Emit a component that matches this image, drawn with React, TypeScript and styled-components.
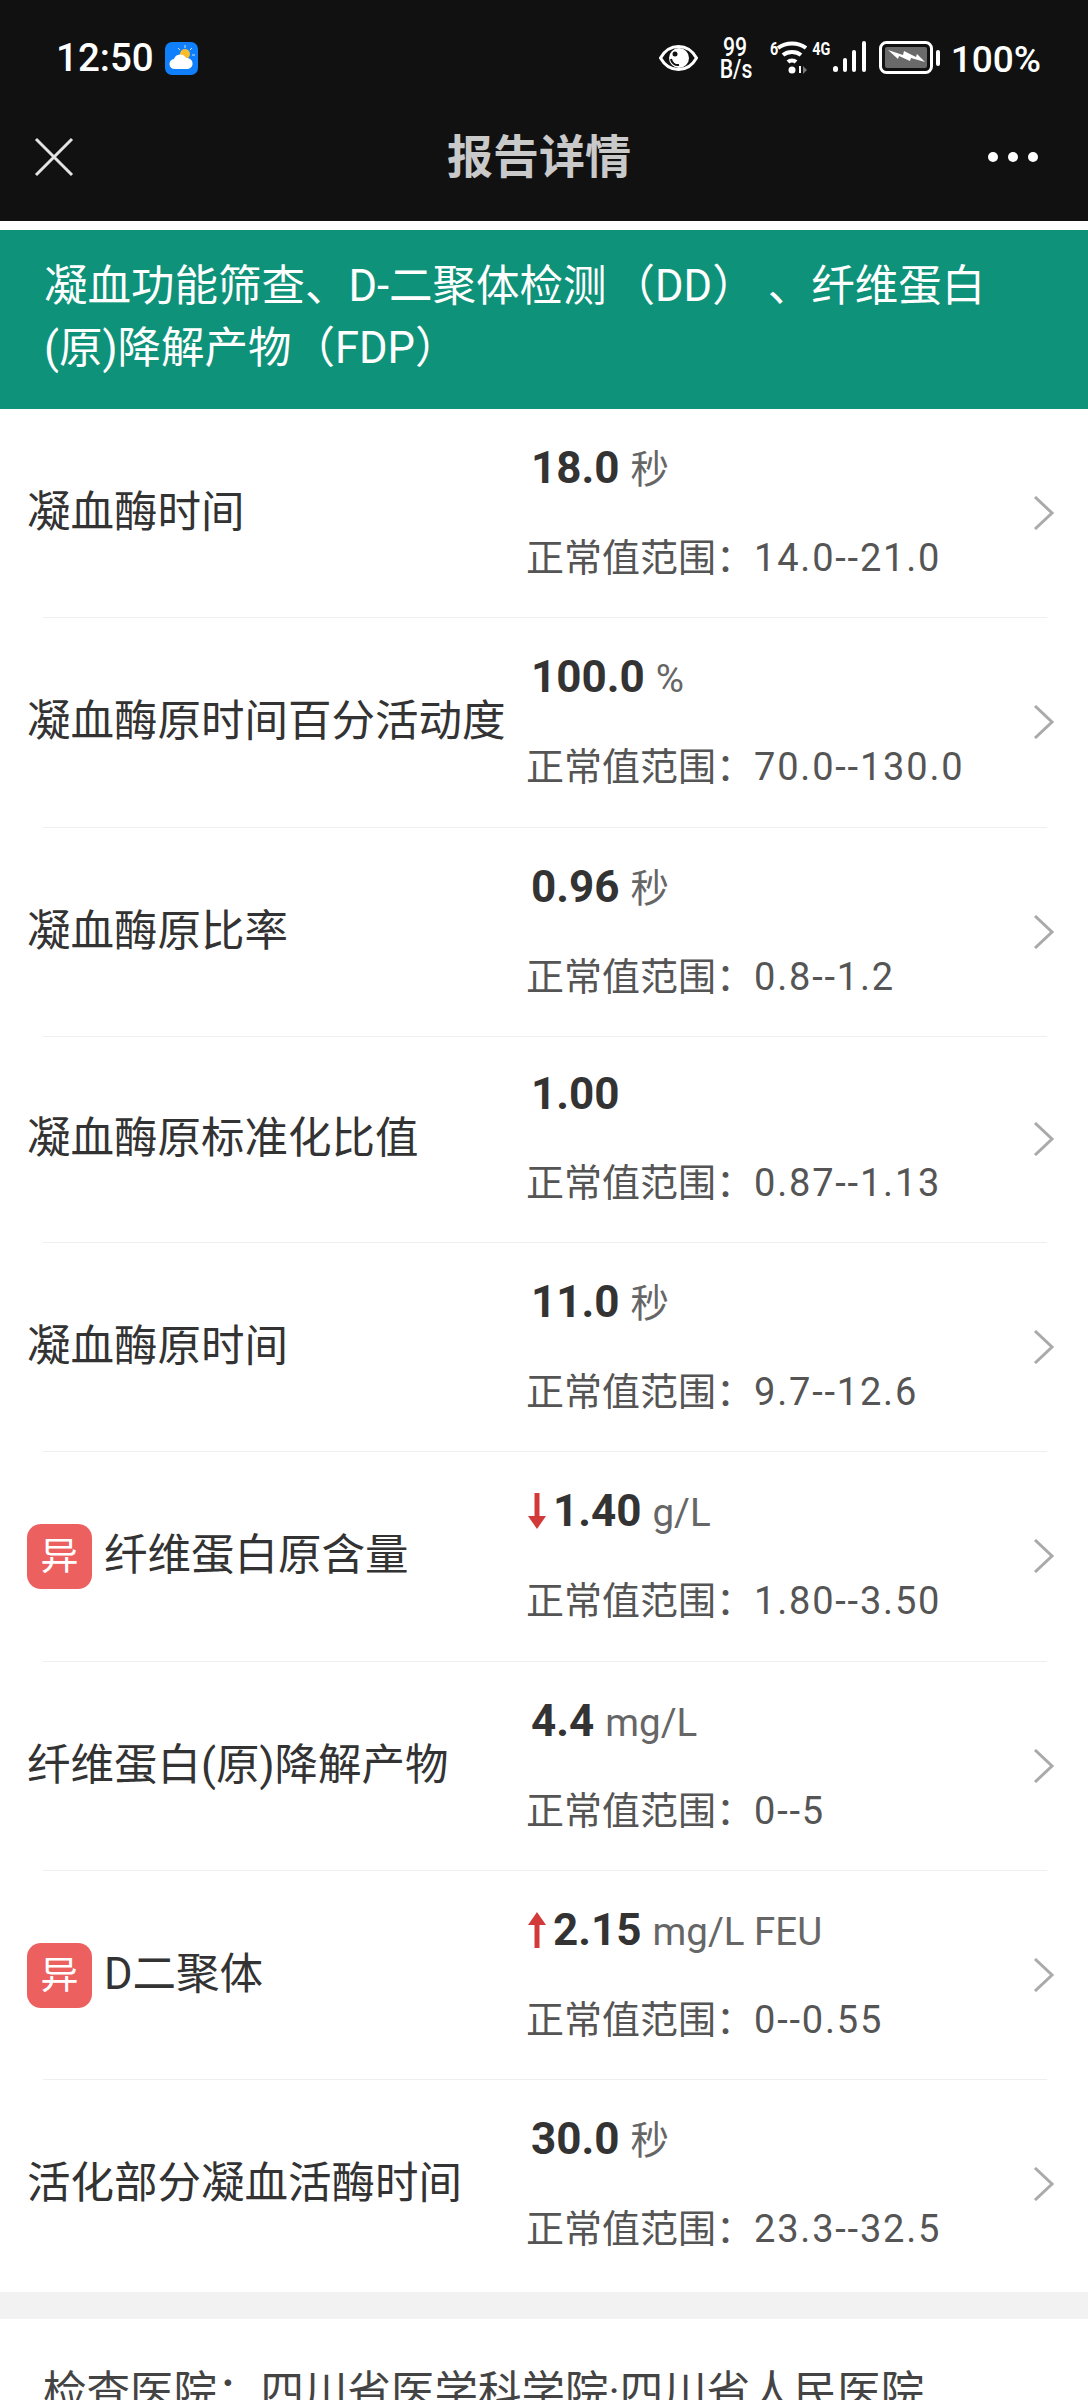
import styled, { createGlobalStyle } from 'styled-components';

const GlobalStyle = createGlobalStyle`
  html, body {
    margin: 0;
    padding: 0;
    background: #fff;
  }
  body {
    font-family: Roboto, "Noto Sans CJK SC", sans-serif;
    text-spacing-trim: space-all;
  }
  #root {
    height: 2400px;
    overflow: hidden;
  }
`;

const Header = styled.header`
  background: #111112;
  height: 221px;
  display: flex;
  flex-direction: column;
`;

const StatusBar = styled.div`
  height: 116px;
  padding: 0 47px 0 56px;
  display: flex;
  align-items: flex-start;
  justify-content: space-between;
  color: #fff;
`;

const StatusLeft = styled.div`
  display: flex;
  align-items: center;
  gap: 11px;
  padding-top: 41px;
`;

const Clock = styled.span`
  font-size: 38.5px;
  font-weight: 500;
  line-height: 34px;
`;

const StatusRight = styled.div`
  display: flex;
  align-items: flex-start;
  padding-top: 37px;
`;

const Speed = styled.div`
  width: 36px;
  margin: 0 16px 0 19px;
  font-size: 25px;
  line-height: 22px;
  text-align: center;
  font-weight: 500;
  transform: scaleX(0.85);
`;

const Tiny = styled.span<{ $gap: number }>`
  font-size: 18px;
  font-weight: 700;
  line-height: 18px;
  margin: 3px 0 0 ${({ $gap }) => $gap}px;
  transform: scaleX(0.8);
`;

const Percent = styled.span`
  font-size: 37px;
  font-weight: 500;
  line-height: 40px;
  margin: 3px 0 0 11px;
`;

const NavBar = styled.nav`
  height: 105px;
  padding: 0 50px 24px 34px;
  box-sizing: border-box;
  display: flex;
  align-items: center;
  justify-content: space-between;
`;

const NavTitle = styled.h1`
  margin: 0 0 0 16px;
  font-size: 46px;
  line-height: 60px;
  font-weight: 700;
  color: #c9c9c9;
`;

const TitleBand = styled.div`
  margin-top: 9px;
  background: #0e9279;
  padding: 26px 70px 29px 44px;
  color: #fff;
  font-size: 43.5px;
  line-height: 62px;
`;

const TitleAbbr = styled.span`
  padding: 0 12px 0 5px;
`;

const List = styled.ul`
  margin: 0;
  padding: 0 0 2px;
  list-style: none;
`;

const Row = styled.li`
  position: relative;
  display: flex;
  align-items: center;
  padding: 14px 33px 15.3px 27px;

  &::after {
    content: '';
    position: absolute;
    left: 43px;
    right: 41px;
    bottom: 0;
    height: 1px;
    background: #efefef;
  }

  &:last-child::after {
    display: none;
  }
`;

const Label = styled.div`
  width: 500px;
  display: flex;
  align-items: center;
  gap: 12px;
  font-size: 43.5px;
  line-height: 62px;
  color: #333;
`;

const Badge = styled.span`
  width: 65px;
  height: 65px;
  border-radius: 14px;
  background: #ec6060;
  color: #fff;
  font-size: 38px;
  line-height: 65px;
  text-align: center;
`;

const Values = styled.div`
  flex: 1;
`;

const Reading = styled.div<{ $flagged: boolean; $bare: boolean }>`
  display: flex;
  align-items: baseline;
  height: ${({ $bare }) => ($bare ? 87 : 90)}px;
  padding-left: ${({ $flagged }) => ($flagged ? 0 : 4)}px;
  line-height: ${({ $bare }) => ($bare ? 87 : 90)}px;
`;

const Amount = styled.strong`
  font-size: 44px;
  font-weight: 700;
  color: #333;
  margin-right: 11px;
`;

const Unit = styled.span`
  font-size: 38.5px;
  color: #666;
`;

const Range = styled.div`
  font-size: 38px;
  line-height: 90px;
  color: #555;
  margin-left: -1px;
`;

const RangeValue = styled.span`
  letter-spacing: 1.8px;
`;

const ArrowIcon = styled.svg`
  align-self: center;
  margin-right: 6px;
`;

const Chevron = styled.svg`
  width: 22px;
  height: 34px;
  flex-shrink: 0;
`;

const Gap = styled.div`
  height: 27px;
  background: #f2f2f2;
`;

const Details = styled.div`
  padding: 43px 43px 0;
  font-size: 43.5px;
  line-height: 62px;
  color: #444;
`;

type Item = {
  name: string;
  value: string;
  unit?: string;
  range: string;
  flag?: 'up' | 'down';
};

const items: Item[] = [
  { name: '凝血酶时间', value: '18.0', unit: '秒', range: '14.0--21.0' },
  { name: '凝血酶原时间百分活动度', value: '100.0', unit: '%', range: '70.0--130.0' },
  { name: '凝血酶原比率', value: '0.96', unit: '秒', range: '0.8--1.2' },
  { name: '凝血酶原标准化比值', value: '1.00', range: '0.87--1.13' },
  { name: '凝血酶原时间', value: '11.0', unit: '秒', range: '9.7--12.6' },
  { name: '纤维蛋白原含量', value: '1.40', unit: 'g/L', range: '1.80--3.50', flag: 'down' },
  { name: '纤维蛋白(原)降解产物', value: '4.4', unit: 'mg/L', range: '0--5' },
  { name: 'D二聚体', value: '2.15', unit: 'mg/L FEU', range: '0--0.55', flag: 'up' },
  { name: '活化部分凝血活酶时间', value: '30.0', unit: '秒', range: '23.3--32.5' },
];

const Arrow = ({ up }: { up: boolean }) => (
  <ArrowIcon width="20" height="36" viewBox="0 0 20 36">
    <g fill="#d23a3a" transform={up ? undefined : 'rotate(180 10 18)'}>
      <rect x="7.500" y="10" width="5" height="26" />
      <path d="M10 0 L19 13 L1 13 Z" />
    </g>
  </ArrowIcon>
);

export default function App() {
  return (
    <>
      <GlobalStyle />
      <Header>
        <StatusBar>
          <StatusLeft>
            <Clock>12:50</Clock>
            <svg width="33" height="33" viewBox="0 0 33 33">
              <rect width="33" height="33" rx="7" fill="#0f7ffb" />
              <circle cx="20" cy="12" r="5" fill="#f7bd2c" />
              <path d="M20 3v3M27 6l-2 2M30 13h-3M13 6l2 2" stroke="#cfe4ff" strokeWidth="1" />
              <path d="M10 27a5 5 0 0 1-1-10 6.500 6.500 0 0 1 12-1 5.500 5.500 0 0 1 2 11z" fill="#fff" />
            </svg>
          </StatusLeft>
          <StatusRight>
            <svg width="39" height="28" viewBox="0 0 39 28" style={{ marginTop: 7 }}>
              <path d="M1.500 14C6 6 12 2.500 19.500 2.500S33 6 37.500 14C33 22 27 25.500 19.500 25.500S6 22 1.500 14Z" fill="none" stroke="#fff" strokeWidth="3" />
              <circle cx="20" cy="14" r="10" fill="#fff" />
              <path d="M12 15a7 7 0 0 0 8 6" fill="none" stroke="#111" strokeWidth="2" />
              <circle cx="16" cy="10" r="2.500" fill="#111" />
            </svg>
            <Speed>
              99
              <br />
              B/s
            </Speed>
            <Tiny $gap={0}>6</Tiny>
            <svg width="30" height="34" viewBox="0 0 30 34" style={{ marginTop: 3, marginLeft: -2 }}>
              <g fill="none" stroke="#fff" strokeWidth="4">
                <path d="M1 8c8-6 20-6 28 0" />
                <path d="M6 15c5-4 13-4 18 0" />
                <path d="M11 22c2-2 6-2 8 0" />
              </g>
              <circle cx="15" cy="30" r="3.500" fill="#fff" />
              <path d="M23 26v7" stroke="#fff" strokeWidth="2" />
              <path d="M26 26l4 4-4 4z" fill="#777" />
            </svg>
            <Tiny $gap={3}>4G</Tiny>
            <svg width="34" height="32" viewBox="0 0 34 32" style={{ marginTop: 4 }}>
              <g fill="#fff">
                <rect x="0" y="25" width="5" height="6" rx="2.500" />
                <rect x="10" y="17" width="4" height="14" rx="2" />
                <rect x="19" y="9" width="4" height="22" rx="2" />
                <rect x="29" y="0" width="4" height="31" rx="2" />
              </g>
            </svg>
            <svg width="61" height="33" viewBox="0 0 61 33" style={{ marginTop: 4, marginLeft: 12 }}>
              <rect x="1.500" y="1.500" width="51" height="30" rx="6" fill="none" stroke="#fff" strokeWidth="3" />
              <rect x="6" y="6" width="42" height="21" rx="2" fill="#6a6a6a" />
              <path d="M9 9l15 5 1-4 12 6 1-3 8 8-14-4-1 3-11-5-1 3z" fill="#fff" />
              <rect x="57" y="9" width="4" height="16" rx="2" fill="#fff" />
            </svg>
            <Percent>100%</Percent>
          </StatusRight>
        </StatusBar>
        <NavBar>
          <svg width="40" height="40" viewBox="0 0 40 40">
            <path d="M2 2 L38 38 M38 2 L2 38" stroke="#e4e4e4" strokeWidth="3" />
          </svg>
          <NavTitle>报告详情</NavTitle>
          <svg width="50" height="12" viewBox="0 0 50 12">
            <g fill="#fff">
              <circle cx="5" cy="6" r="5" />
              <circle cx="25" cy="6" r="5" />
              <circle cx="45" cy="6" r="5" />
            </g>
          </svg>
        </NavBar>
      </Header>
      <TitleBand>
        凝血功能筛查、D-二聚体检测<TitleAbbr>（DD）</TitleAbbr>、纤维蛋白(原)降解产物（FDP）
      </TitleBand>
      <List>
        {items.map((item) => (
          <Row key={item.name}>
            <Label>
              {item.flag && <Badge>异</Badge>}
              {item.name}
            </Label>
            <Values>
              <Reading $flagged={!!item.flag} $bare={!item.unit}>
                {item.flag && <Arrow up={item.flag === 'up'} />}
                <Amount>{item.value}</Amount>
                {item.unit && <Unit>{item.unit}</Unit>}
              </Reading>
              <Range>
                正常值范围：<RangeValue>{item.range}</RangeValue>
              </Range>
            </Values>
            <Chevron viewBox="0 0 22 34">
              <path d="M2 1 L19 17 L2 33" fill="none" stroke="#aaa" strokeWidth="3" />
            </Chevron>
          </Row>
        ))}
      </List>
      <Gap />
      <Details>检查医院：四川省医学科学院·四川省人民医院</Details>
    </>
  );
}
